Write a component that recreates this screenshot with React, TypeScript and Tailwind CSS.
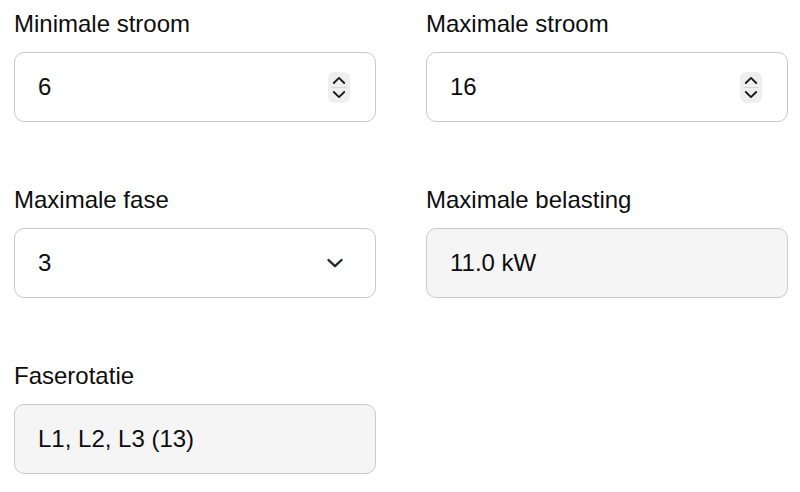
import { ReactNode } from 'react'

function Spinner() {
  return (
    <div className="flex h-[31px] w-[22px] flex-col items-center justify-center rounded-[6px] bg-[#efefef]">
      <svg width="14" height="9" viewBox="0 0 14 9" fill="none">
        <path d="M1.8 7 L7 1.9 L12.2 7" stroke="#1a1a1a" strokeWidth="1.9" strokeLinecap="round" strokeLinejoin="round" />
      </svg>
      <div className="my-[2px] h-px w-[16px] bg-[#d8d8d8]" />
      <svg width="14" height="9" viewBox="0 0 14 9" fill="none">
        <path d="M1.8 2 L7 7.1 L12.2 2" stroke="#1a1a1a" strokeWidth="1.9" strokeLinecap="round" strokeLinejoin="round" />
      </svg>
    </div>
  )
}

function Chevron() {
  return (
    <svg width="18" height="12" viewBox="0 0 18 12" fill="none">
      <path d="M2.5 3 L9 9.2 L15.5 3" stroke="#1f2a2a" strokeWidth="2.4" strokeLinecap="round" strokeLinejoin="round" />
    </svg>
  )
}

function Field({
  label,
  value,
  readOnly,
  right,
}: {
  label: string
  value: string
  readOnly?: boolean
  right?: ReactNode
}) {
  return (
    <div className="flex flex-col gap-[14px]">
      <span className="text-[24px] leading-[28px] text-[#0d0d0d]">{label}</span>
      <div
        className={`flex h-[70px] items-center justify-between rounded-[10px] border border-[#c8cbcc] pl-[23px] ${
          readOnly ? 'bg-[#f5f5f5]' : 'bg-white'
        }`}
      >
        <span className="text-[24px] leading-[28px] text-[#0d0d0d]">{value}</span>
        {right}
      </div>
    </div>
  )
}

export default function App() {
  return (
    <div
      className="min-h-[492px] w-[800px] bg-white pl-[14px] pr-[12px] pt-[10px]"
      style={{ fontFamily: '"Liberation Sans", Arial, sans-serif' }}
    >
      <div className="grid grid-cols-2 gap-x-[50px] gap-y-[64px]">
        <Field
          label="Minimale stroom"
          value="6"
          right={
            <div className="mr-[25px]">
              <Spinner />
            </div>
          }
        />
        <Field
          label="Maximale stroom"
          value="16"
          right={
            <div className="mr-[25px]">
              <Spinner />
            </div>
          }
        />
        <Field
          label="Maximale fase"
          value="3"
          right={
            <div className="mr-[31px] flex items-center">
              <Chevron />
            </div>
          }
        />
        <Field label="Maximale belasting" value="11.0 kW" readOnly />
        <Field label="Faserotatie" value="L1, L2, L3 (13)" readOnly />
      </div>
    </div>
  )
}
